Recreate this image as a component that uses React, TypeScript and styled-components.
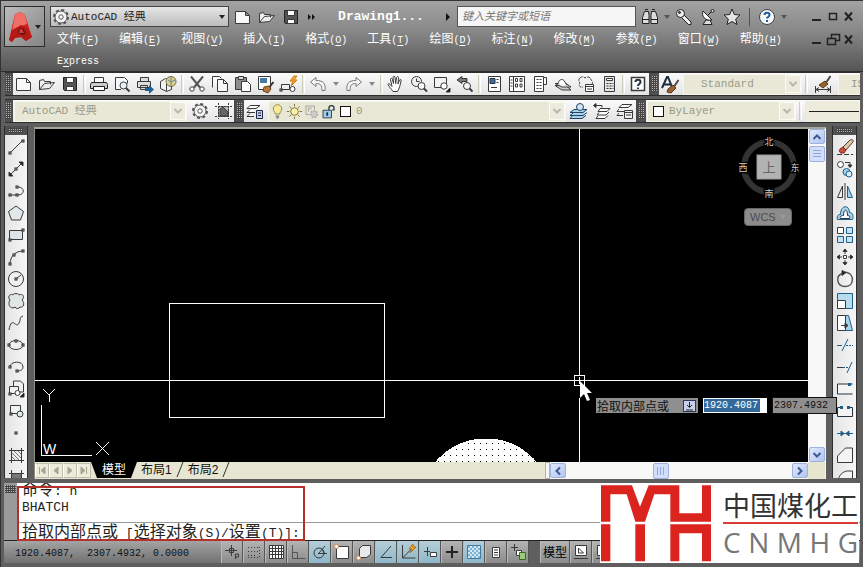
import React from "react";
import styled, { createGlobalStyle, css } from "styled-components";

const MONO = '"Liberation Mono", "Noto Sans CJK SC", monospace';
const SANS = '"Liberation Sans", "Noto Sans CJK SC", sans-serif';

const GlobalStyle = createGlobalStyle`
  * { box-sizing: border-box; }
  body { margin: 0; background: #5e5e5e; font-family: ${MONO}; font-size: 12px; color: #222; }
  button, input, select { font-family: inherit; margin: 0; }
`;

/* ---------- icons ---------- */

const node = (x: number, y: number) => (
  <rect key={`${x}-${y}`} x={x - 1} y={y - 1} width="2" height="2" fill="#fff" stroke="#222" />
);
const BLUE = "#a9d3ea";
const DEEP = "#1f5f8b";

const glyphs: Record<string, React.ReactNode> = {
  newFile: <path d="M2.5 4.5h10l4 4v8h-14z M12.5 4.5v4h4" fill="#f8f8f8" />,
  open: <path d="M2.5 15.5v-9l4-1 1 2h6v3 M2.5 15.5l5-6 10-1-5 6z" fill="#eee" />,
  save: (
    <>
      <path d="M3.5 3.5h13v13h-12l-1-1z" fill="#555" stroke="#222" />
      <path d="M6.5 3.5h7v5h-7z M6.5 12.5h7v4h-7z" fill="#fff" />
    </>
  ),
  print: (
    <>
      <path d="M5.5 8.500v-5h9v5" fill="#fff" />
      <path d="M2.500 8.500h15l1 2v4h-3v-2h-11v2h-3v-4z" fill="#ccc" stroke="#222" />
      <path d="M4.500 12.500h11v4h-11z" fill="#fff" stroke="#222" />
    </>
  ),
  preview: (
    <>
      <path d="M9 15.500h-5.500v-12h9l3 3v3" fill="#f6f6f6" />
      <circle cx="11.500" cy="11.500" r="3.500" fill="#e8f2f7" />
      <path d="M14 14l3.500 3.500" strokeWidth="2" />
    </>
  ),
  publish: (
    <>
      <path d="M5.500 7.500v-4h8v4 M2.500 7.500h13v6h-13z M5.500 11.500h7v4h-7z" fill="#ddd" />
      <path d="M10 14h4v-3l5 4.500-5 4.500v-3h-4z" fill="#1c5f94" stroke="none" />
    </>
  ),
  dwf: (
    <>
      <path d="M2.500 7.500l5-3 6 2v9l-5 2-6-3z" fill="#eef4f6" />
      <circle cx="13" cy="7.500" r="5" fill="#e0cf8b" stroke="#7c6b3a" />
      <path d="M10 6l3 2 4-2 M13 3v9" stroke="#5b8aa0" />
      <path d="M8.500 10v7" />
    </>
  ),
  cut: (
    <>
      <path d="M4 2.500l9 11 M16 2.500l-9 11" strokeWidth="2" stroke="#555" />
      <circle cx="5" cy="15" r="2.200" fill="#fff" />
      <circle cx="15" cy="15" r="2.200" fill="#fff" />
    </>
  ),
  copy: <path d="M2.500 13.500v-11h7l2 2 M7.500 5.500h6l4 4v8h-10z M13.500 5.500v4h4" fill="#f8f8f8" />,
  paste: (
    <>
      <path d="M2.500 3.500h11v12h-11z" fill="#8d8d8d" />
      <path d="M5.500 2.500h5v3h-5z" fill="#ddd" />
      <path d="M8.500 7.500h6l3 3v7h-9z" fill="#fff" />
    </>
  ),
  match: (
    <>
      <path d="M2.500 2.500h12v13h-12z" fill="#fff" />
      <path d="M4 4h7v5h-7z" fill="#4779a4" stroke="none" />
      <path d="M17.500 8l-4 5" stroke="#333" strokeWidth="2" />
      <path d="M8 13l5-1 2 3-3 4-5-2z" fill="#b4783b" stroke="#6e4218" />
    </>
  ),
  blockEdit: (
    <>
      <path d="M2.500 15.500v-5h8v5z" fill="#eee" />
      {node(2, 16)}
      <circle cx="13.500" cy="15" r="2.500" fill="#fff" />
      <path d="M15 2l-4 5h3l-2 5 6-6h-3l3-4z" fill="#f7a928" stroke="#c97b12" />
    </>
  ),
  undo: <path d="M8 3.500l-5.500 4.500 5.500 4.500v-3c5 0 6 2 6 7 l3 0c1-7-2-10-9-10z" fill="#fafafa" stroke="#777" />,
  redo: <path d="M12 3.500l5.500 4.500-5.500 4.500v-3c-5 0-6 2-6 7l-3 0c-1-7 2-10 9-10z" fill="#fafafa" stroke="#777" />,
  pan: (
    <path d="M7 17.500c-2-3-4-5-5-7 0-1 2-1 3 1l1 1-1.500-7c0-1.500 1.500-1.500 2 0l1 4-.5-6c0-1.500 2-1.500 2 0l.7 6 .8-6c.5-1.500 2-1 2 0l-.5 6.500 1.500-4c1-1 2-.5 1.500 1-1 5-1.500 7-3.500 10.500z" fill="#fff" />
  ),
  zoomRt: (
    <>
      <circle cx="7.500" cy="7.500" r="5" fill="#eee" />
      <path d="M7.500 4.500v3h3" />
      <circle cx="12.500" cy="12" r="3.500" fill="#f6f6f6" />
      <path d="M15 14.500l3 3" strokeWidth="2" />
    </>
  ),
  zoomWin: (
    <>
      <path d="M2.500 3.500h12v10h-12z" fill="#f3f3f3" />
      <circle cx="12" cy="12" r="3.200" fill="#fff" />
      <path d="M18 14v4h-4z" fill="#111" />
    </>
  ),
  zoomPrev: (
    <>
      <path d="M7 2.500l-5 3.500 5 3.500v-2h5v-3h-5z" fill="#777" />
      <circle cx="12" cy="12" r="3.500" fill="#f6f6f6" />
      <path d="M14.500 14.500l3 3" strokeWidth="2" />
    </>
  ),
  props: (
    <>
      <path d="M4.500 2.500h12v15h-12z" fill="#fff" />
      <path d="M6 4.500h5v5h-5z" fill="#3e6a95" stroke="#234" />
      <path d="M12.500 5.500h2 M12.500 8.500h2 M7 13.500h6" />
    </>
  ),
  center: (
    <>
      <path d="M2.500 2.500h15v15h-15z M6.500 2.500v15" fill="#fff" />
      <path d="M8.500 4.500h2v3h-2z M13 4.500h2v3h-2z M8.500 10h2v3h-2z M13 10h2v3h-2z M3.500 6h2 M3.500 9h2 M3.500 12h2" />
    </>
  ),
  palettes: (
    <>
      <path d="M4.500 2.500h9v15h-9z M13.500 3.500h3v7h-3" fill="#fff" />
      <path d="M6.500 5.500h5 M6.500 8.500h5 M6.500 11.500h5 M6.500 14.500h5" strokeDasharray="2 1" />
    </>
  ),
  sheets: (
    <>
      <path d="M2 11.500l7 4.500h9l-5-4.500z" fill="#ccc" />
      <path d="M2 9.500l7 3.500h9l-5-3.500z" fill="#eee" />
      <path d="M5 9.500c1-4 4-5 6-3l3 5" fill="#fff" />
    </>
  ),
  markup: (
    <>
      <path d="M4 4c2-2 4-1 5 0 2-2 6-1 6 2 2 1 2 4 0 5M4 4c-2 2-1 4 0 5-2 2 0 5 3 4" strokeDasharray="3 1" />
      <path d="M9.500 10.500h8v7h-8z M9.500 12.500h8 M11 15h5" fill="#fff" />
    </>
  ),
  calc: (
    <>
      <path d="M5.500 2.500h10v15h-10z" fill="#e6e6e6" />
      <path d="M7.500 4.500h6v2h-6z" fill="#fff" />
      <path d="M7.500 9.500h7 M7.500 12h7 M7.500 14.500h7" strokeDasharray="2 1" />
    </>
  ),
  help: (
    <>
      <path d="M3.500 3.500h13v13h-13z" fill="#fff" strokeWidth="1.500" />
      <path d="M7.500 8c0-3 5-3 5 0 0 2-2.500 2-2.500 4 M10 13.500v1.500" strokeWidth="2" stroke="#234" />
    </>
  ),
  gear: (
    <>
      <circle cx="10" cy="10" r="7" strokeWidth="2" strokeDasharray="3 2.500" stroke="#555" />
      <circle cx="10" cy="10" r="6" fill="#f3f3f3" stroke="#555" />
      <circle cx="10" cy="10" r="2.200" fill="#fff" stroke="#555" />
    </>
  ),
  workspace: (
    <>
      <path d="M5.500 5.500h10v10h-10z" fill="#bbb" stroke="#777" />
      <path d="M2 5.500h17 M2 15.500h17 M5.500 2v16 M15.500 2v16" strokeDasharray="2 1" />
      <path d="M7 15v-7l3-2 5 5v4z" fill="#666" />
    </>
  ),
  layers: (
    <>
      <path d="M5 4.500h10l-4 3h-9z M5 8.500l-3 3h8 M5 12.500l-3 3h7" fill="#fff" />
      <path d="M11.500 9.500h6v8h-6z M13 12h3 M13 14.500h3" fill="#b9d5e8" stroke="#224" />
    </>
  ),
  bulb: (
    <>
      <path d="M7.500 13c0-2-2.500-3-2.500-6a5 5 0 0 1 10 0c0 3-2.500 4-2.500 6z" fill="#f7eb9b" stroke="#857b35" />
      <path d="M8 15.500h4 M8.500 17.500h3" />
    </>
  ),
  sun: (
    <>
      <circle cx="10" cy="10" r="4.500" fill="#f9efab" stroke="#6e6425" />
      <path d="M10 1v3 M10 16v3 M1 10h3 M16 10h3 M4 4l2 2 M14 14l2 2 M4 16l2-2 M14 6l2-2" stroke="#6e6425" />
    </>
  ),
  freeze: (
    <>
      <path d="M3.500 13.500v-10h10v4 M3.500 13.500h4 M6.500 10v-4h4" fill="none" stroke="#999" />
      <circle cx="13" cy="13" r="4" strokeWidth="2" strokeDasharray="2 1.500" stroke="#aaa" fill="#ccc" />
    </>
  ),
  lock: (
    <>
      <path d="M10.500 9v-3c0-4 6-4 6 0v2h-2" fill="none" stroke="#234" strokeWidth="1.500" />
      <path d="M3.500 8.500h10v9h-10z" fill="#9fcde6" stroke="#234" />
      <path d="M8.500 11v4" stroke="#124" strokeWidth="2" />
    </>
  ),
  makeLayer: (
    <>
      <path d="M5 8.500h13l-4 3h-13z M4 12l-3 2.500h13l4-3 M3 15l-2 2.500h12l4-3" fill={BLUE} stroke="#246" />
      <circle cx="11" cy="6" r="3.500" fill="#cfe6f2" stroke="#246" />
    </>
  ),
  layerPrev: (
    <>
      <path d="M8 7.500h10l-3 3h-9z M7 11.500l-2 2.500h9l3-3 M6 15l-2 2.500h9l3-3" fill="#fff" />
      <path d="M2 4.500h8v2" />
      <path d="M4 2.500l-2.500 2 2.500 2z" fill="#222" />
    </>
  ),
  layerState: (
    <>
      <path d="M7 3.500h10l-4 3h-9z M4 8l-2 2.500h7 M4 12l-2 2.500h6" fill="#fff" />
      <path d="M9.500 9.500h8v8h-8z M9.500 11.500h8 M11 14h5" fill="#eee" />
    </>
  ),
  textStyle: (
    <>
      <path d="M2 14l5-11h1l4 10 M4 10.500h7" fill="none" stroke="#1e2c3c" strokeWidth="2" />
      <path d="M18.500 6l-4 6" stroke="#544" strokeWidth="2" />
      <path d="M8 15l5-4 3 3-5 5-4-1z" fill="#96622e" stroke="#5d3912" />
    </>
  ),
  dimStyle: (
    <>
      <path d="M2.500 12v7 M17.500 12v7 M3 15.500h14 M6 13.500l-3 2 3 2 M14 13.500l3 2-3 2" />
      <path d="M17.500 2l-4 6" stroke="#544" strokeWidth="2" />
      <path d="M6 11l6-4 3 3-5 4z" fill="#96622e" stroke="#5d3912" />
    </>
  ),
  find: (
    <>
      <path d="M4.500 4.500h4l.5 4v8h-6.500v-6z M15.500 4.500h-4l-.5 4v8h6.500v-6z" fill="#ddd" stroke="#222" />
      <path d="M3 12.500h6 M11 12.500h6 M5 2.500h3 M12 2.500h3" stroke="#222" />
    </>
  ),
  key: (
    <>
      <path d="M9 7l8 8v2.500h-2.500l-8-8" fill="#eee" stroke="#222" />
      <circle cx="6.500" cy="6.500" r="4" fill="#eee" stroke="#222" />
      <circle cx="5.500" cy="5.500" r="1" fill="#444" stroke="#222" />
    </>
  ),
  dish: (
    <>
      <path d="M8 13l-3 4.500h9l-2-4.500z" fill="#ddd" stroke="#222" />
      <path d="M5 4c-2 6 3 10 9 9z" fill="#fff" stroke="#222" />
      <path d="M10 8l5-5" stroke="#222" />
      <circle cx="14.500" cy="4" r="1.500" fill="#ddd" stroke="#222" />
    </>
  ),
  star: <path d="M10 2l2.300 5.500 5.700.5-4.300 4 1.300 5.500-5-3-5 3 1.300-5.500-4.300-4 5.700-.5z" fill="#e4e4e4" stroke="#222" />,
  helpRound: (
    <>
      <circle cx="10" cy="10" r="7.500" fill="#f4f8fa" stroke="#444" />
      <path d="M7.500 8c0-3 5-3 5 0 0 2-2.500 2-2.500 3.500 M10 13v2" fill="none" strokeWidth="2" stroke="#1d5c96" />
    </>
  ),
  min: <path d="M5 13h9" stroke="#222" strokeWidth="2" />,
  max: <path d="M6.500 6.500h7v6h-7z" fill="none" stroke="#222" strokeWidth="1.500" />,
  close: <path d="M6 5.500l7 8 M13 5.500l-7 8" stroke="#222" strokeWidth="2" />,
  restore: <path d="M8.500 8.500v-4h8v6h-4 M4.500 8.500h8v6h-8z" fill="none" stroke="#222" strokeWidth="1.500" />,

  line: <>{<path d="M4 16l13-13" />}{node(4, 16)}{node(17, 4)}</>,
  xline: (
    <>
      <path d="M3 17l14-14" />
      <path d="M13 3h4v4z M3 13v4h4z" fill="#222" />
      {node(10, 10)}
    </>
  ),
  pline: <>{<path d="M4 14h8c7 0 7-8 0-8" fill="none" />}{node(4, 14)}{node(11, 14)}{node(11, 6)}</>,
  polygon: <path d="M10 3l7.500 5.500-3 8.500h-9l-3-8.500z" fill="#e3e8ea" />,
  rect: <>{<path d="M3.500 5.500h13v9h-13z" fill="#dde3e6" />}{node(4, 15)}{node(17, 5)}</>,
  arc: <>{<path d="M4 17c0-7 5-13 13-13" fill="none" />}{node(4, 17)}{node(8, 8)}{node(17, 4)}</>,
  circle: (
    <>
      <circle cx="10" cy="10" r="7.500" fill="#eef0f1" />
      <path d="M10 10l5-4" />
      {node(10, 10)}
    </>
  ),
  cloud: <path d="M4 9c-3-3 0-7 3-5 1-2 5-2 6 0 4-2 6 2 3 5 3 3 2 8-2 7-1 2-4 2-5 0-4 3-8-2-5-7z" fill="#e2e5e6" />,
  spline: <path d="M3 17c3-16 7 0 10-7 2-3 0-6 4-7" fill="none" />,
  ellipse: (
    <>
      <ellipse cx="10" cy="10" rx="7" ry="4.500" fill="#eef1f2" />
      {node(3, 10)}{node(17, 10)}{node(10, 6)}
    </>
  ),
  ellArc: <>{<path d="M4 10c0-6 13-7 13 0 0 3-3 4-6 4" fill="none" />}{node(4, 10)}{node(11, 14)}</>,
  insert: (
    <>
      <path d="M7.500 7v-5h7l3 3v8h-6 M3.500 7.500h9v7h-9z" fill="#eef2f4" />
      <circle cx="11.500" cy="14" r="2.500" fill="#fff" />
      {node(4, 15)}
      <path d="M18 14v4h-4z" fill="#111" />
    </>
  ),
  block: (
    <>
      <path d="M4.500 4.500h10v8h-10z" fill="#eef2f4" />
      <circle cx="14" cy="13" r="3" fill="#e1e9ed" />
      {node(5, 13)}
    </>
  ),
  point: <>{node(10, 10)}</>,
  hatch: (
    <>
      <path d="M5.500 3v15 M15.500 3v15 M3 5.500h15 M3 15.500h15" />
      <path d="M6 12l3 3 M6 8l7 7 M8 6l7 7 M12 6l3 3" stroke="#777" />
    </>
  ),
  gradient: (
    <>
      <path d="M5.500 6.500h10v8h-10z" fill="#777" />
      <path d="M3 6.500h15 M5.500 3v15 M15.500 3v15 M3 16.500h15" />
    </>
  ),

  erase: (
    <>
      <path d="M2 17.500h16" strokeDasharray="5 2" />
      <path d="M8 10l7-7c2-1 4 0 3 2l-7 8z" fill="#d8c7ae" stroke="#6b3a1c" />
      <path d="M5 12l3-2 3 3-2 3h-3c-2-1-2-2-1-4z" fill="#c9503d" stroke="#7f261a" />
    </>
  ),
  copyObj: (
    <>
      <circle cx="5.500" cy="5.500" r="3" fill="#fff" />
      <circle cx="11.500" cy="13" r="3.500" fill={BLUE} stroke={DEEP} />
      <circle cx="14" cy="15" r="3" fill="#d4ebf7" stroke={DEEP} />
      <path d="M10 3.500h5v3" />
      <path d="M13 6l2 2.500 2-2.500z" fill="#222" />
    </>
  ),
  mirror: (
    <>
      <path d="M7.500 5v11.500h-5z" fill="#eee" />
      <path d="M12.500 5v11.500h5z" fill={BLUE} stroke={DEEP} />
      <path d="M10 2v17" />
    </>
  ),
  offset: (
    <>
      <path d="M2.500 16.500c-1-4 1-5 3-5 0-10 9-10 9-2 4 0 4 5 3 7z" fill={BLUE} stroke={DEEP} />
      <path d="M5.500 15.500c-1-2 1-3 3-3 0-7 4-7 4 0 2 0 3 1 2 3z" fill="#fff" stroke="#234" />
    </>
  ),
  array: (
    <>
      <path d="M2.500 2.500h6v6h-6z" fill="#fff" />
      <path d="M11.500 2.500h6v6h-6z M2.500 11.500h6v6h-6z M11.500 11.500h6v6h-6z" fill="#c5e3f3" stroke={DEEP} />
    </>
  ),
  move: (
    <>
      <path d="M8.500 8.500h3v3h-3z" fill="#fff" />
      <path d="M10 7v-4 M10 13v4 M7 10h-4 M13 10h4" />
      <path d="M8 4.500l2-2.500 2 2.500z M8 15.500l2 2.500 2-2.500z M4.500 8l-2.500 2 2.500 2z M15.500 8l2.500 2-2.500 2z" fill="#222" />
    </>
  ),
  rotate: (
    <>
      <path d="M7 4.500c-7 3-5 13 3 13 9 0 10-12 2-14h-4" fill="none" stroke="#555" strokeWidth="1.500" />
      <path d="M7 1.500l4 2-4 3z" fill="#222" />
    </>
  ),
  scale: (
    <>
      <path d="M2.500 2.500h15v15h-15z" fill="#b7dced" stroke={DEEP} />
      <path d="M2.500 9.500h8v8h-8z" fill="#fff" />
    </>
  ),
  stretch: (
    <>
      <path d="M10.500 2.500h3l4 15h-7z" fill={BLUE} stroke={DEEP} />
      <path d="M2.500 2.500h8v15h-8z" fill="#fff" />
      <path d="M6 12.500h6 M10 10l3 2.500-3 2.500z" fill="#222" />
    </>
  ),
  trim: (
    <>
      <path d="M2 10.500h5 M7 16l6-12" stroke={DEEP} />
      <path d="M11 10.500h7" strokeDasharray="2 1" stroke={DEEP} />
    </>
  ),
  extend: (
    <>
      <path d="M2 10.500h6" />
      <path d="M8 10.500h6" strokeDasharray="2 1" stroke={DEEP} />
      <path d="M12 16l5-11" stroke={DEEP} />
    </>
  ),
  breakAt: (
    <>
      <path d="M17.500 5h-15v10h15" fill="#f4f4f4" stroke="#234" />
      <rect x="13" y="4" width="3" height="3" fill={DEEP} stroke="none" />
    </>
  ),
  breakObj: (
    <>
      <path d="M5 6.500h-2.500v9h15v-9h-3" fill="#f4f4f4" stroke="#234" />
      <path d="M5 5h3v3h-3z M12 5h3v3h-3z" fill={DEEP} stroke="none" />
    </>
  ),
  join: <path d="M2 10.500h16 M6 8l3 2.500-3 2.500z M14 8l-3 2.500 3 2.500z" fill={DEEP} stroke={DEEP} />,
  chamfer: <path d="M2.500 11l8-8h7v14.500h-15z" fill="#f4f4f4" />,
  fillet: <path d="M2.500 19v-4c1-7 6-11 10-11h5v15" fill="#f4f4f4" />,

  infer: (
    <>
      <path d="M3 8.500h12 M9.500 3v11 M7.500 6.500h4v4h-4z" />
      <path d="M13.500 17v-5h3v3h-3" />
    </>
  ),
  snap: <path d="M4 5.500h12 M4 9.500h12 M4 13.500h9 M15.500 5v11 M4 15.500h12" strokeDasharray="1 2" />,
  grid: <path d="M3.500 3.500h14v13h-14z M6.500 3v13 M9.500 3v13 M12.500 3v13 M15.500 3v13 M3 6.500h14 M3 9.500h14 M3 12.500h14" fill="#fff" />,
  ortho: <path d="M4.500 3v13.500h13 M4.500 10.500h5v6" fill="none" stroke="#555" />,
  polar: (
    <>
      <circle cx="9" cy="11" r="5" fill="none" />
      <path d="M8 11.500h9 M9 11l6-7 M12 7l2 4" />
    </>
  ),
  osnap: (
    <>
      <path d="M4.500 4.500h12v12h-12z" fill="#fff" />
      <circle cx="4.500" cy="4.500" r="2" fill="#fff" stroke="#d98a4c" />
    </>
  ),
  osnap3: (
    <>
      <path d="M5.500 6.500l3-3h8v9l-4 3h-7z" fill="#e6eaec" />
      <circle cx="4.500" cy="16" r="2" fill="#fff" stroke="#d98a4c" />
    </>
  ),
  otrack: <path d="M15 4l-10 11.500h11" fill="none" />,
  ducs: (
    <>
      <path d="M4.500 3v13h13 M4.500 16l9-9" fill="none" />
      <path d="M15 2l-4 5h3l-2 4 6-6h-3z" fill="#f7a928" stroke="#b36f10" />
    </>
  ),
  dyn: <path d="M4 9.500h6 M7.500 5v9 M10.500 10.500h6v4h-6z" fill="#fff" />,
  lwt: <path d="M4 10h12 M10 4v12" strokeWidth="2" stroke="#222" />,
  tpy: (
    <>
      <path d="M3.500 3.500h13v13h-13z" fill="#d5e9f3" stroke="#3f7ba0" />
      <path d="M4 5h12 M4 9h12 M4 13h12" strokeDasharray="2 2" stroke="#7fb2d2" strokeWidth="2" />
      <path d="M6 7h10 M6 11h10 M6 15h10" strokeDasharray="2 2" stroke="#7fb2d2" strokeWidth="2" />
    </>
  ),
  qp: <path d="M6.500 5.500h7v10h-7z M8 8h4 M8 10.500h4 M8 13h4" fill="#fff" />,
  sc: (
    <>
      <path d="M3 5.500h7 M6.500 2v7" />
      <path d="M8.500 8.500h5v5h-5z" fill="#fff" />
      <path d="M11.500 10.500h6v7h-6z" fill="#9ccc79" stroke="#356b1c" />
    </>
  ),
  modelSpace: (
    <>
      <path d="M4.500 3.500h11v10h-11z" fill="#fff" />
      <path d="M7.500 6v5h5z M3 16.500h14" fill="none" />
    </>
  ),
};

const Svg = styled.svg`
  display: block;
  flex: none;
`;

function Icon({ name, size = 20 }: { name: string; size?: number }) {
  return (
    <Svg width={size} height={size} viewBox="0 0 20 20" fill="none" stroke="#3a3a3a" aria-hidden="true">
      {glyphs[name]}
    </Svg>
  );
}

/* ---------- shared parts ---------- */

const IconButton = styled.button<{ $w?: number }>`
  width: ${(p) => p.$w ?? 20}px;
  height: 20px;
  flex: none;
  padding: 0;
  border: 0;
  background: none;
  display: flex;
  align-items: center;
  justify-content: center;
`;

const Caret = styled.span<{ $color?: string }>`
  border: 3px solid transparent;
  border-top: 4px solid ${(p) => p.$color ?? "#555"};
  border-bottom: 0;
`;

const Chevron = ({ color = "#3d5a94", turn = 0 }: { color?: string; turn?: number }) => (
  <Svg width="10" height="10" viewBox="0 0 10 10" aria-hidden="true">
    <path d="M1.500 3l3.500 3.500 3.500-3.500" fill="none" stroke={color} strokeWidth="2" transform={`rotate(${turn} 5 5)`} />
  </Svg>
);

const dotted = css`
  background:
    repeating-linear-gradient(0deg, #444 0 1px, transparent 1px 2px) content-box,
    repeating-linear-gradient(90deg, #b4b4b4 0 1px, #444 1px 2px) content-box,
    #505050;
`;

/* ---------- header ---------- */

const Window = styled.div`
  min-height: 100vh;
  display: flex;
  flex-direction: column;
  background: #5e5e5e;
  border-left: 1px solid #333;
  position: relative;
  overflow: hidden;
`;

const Header = styled.header`
  display: flex;
  align-items: flex-start;
  gap: 5px;
  height: 72px;
  padding: 5px 6px 0 3px;
  background: linear-gradient(#a2a2a2, #8a8a8a 40%, #555);
  border-top: 1px solid #333;
  border-bottom: 1px solid #2d2d2d;
`;

const AppButton = styled.button`
  width: 41px;
  height: 41px;
  flex: none;
  display: flex;
  align-items: center;
  justify-content: center;
  gap: 2px;
  padding: 0;
  border: 1px solid #2c2c2c;
  background: linear-gradient(135deg, #bbb, #858585);
`;

const HeaderRows = styled.div`
  flex: 1;
  min-width: 0;
`;

const TitleRow = styled.div`
  display: flex;
  align-items: center;
  gap: 4px;
  height: 21px;
`;

const WorkspacePicker = styled.label`
  display: flex;
  align-items: center;
  width: 179px;
  height: 21px;
  padding-right: 3px;
  border: 1px solid #444;
  background: linear-gradient(#e6e6e6, #bcbcbc);
`;

const PlainSelect = styled.select<{ $color: string }>`
  flex: 1;
  min-width: 0;
  height: 100%;
  padding: 0;
  border: 0;
  appearance: none;
  background: transparent;
  font-size: 11px;
  color: ${(p) => p.$color};
`;

const More = styled(IconButton)`
  color: #111;
`;

const DocTitle = styled.h1`
  flex: 1;
  margin: 0;
  text-align: center;
  font-family: "Liberation Mono", monospace;
  font-size: 13px;
  line-height: 20px;
  font-weight: bold;
  color: #fff;
  white-space: nowrap;
`;

const Search = styled.input`
  width: 179px;
  height: 21px;
  padding: 0 4px;
  border: 1px solid #555;
  background: #f6f6f6;
  font-size: 11px;
  &::placeholder { color: #777; font-style: italic; opacity: 1; }
`;

const Divider = styled.span`
  width: 1px;
  height: 18px;
  margin: 0 3px;
  background: #555;
`;

const WindowButtons = styled.div`
  display: flex;
  flex: none;
  padding-left: 18px;
  button { width: 16px; }
`;

const MenuRow = styled.div`
  display: flex;
  align-items: flex-start;
  padding: 3px 0 0 7px;
`;

const Menu = styled.nav`
  flex: 1;
  display: flex;
  flex-wrap: wrap;
  column-gap: 20px;
`;

const MenuItem = styled.button`
  padding: 0;
  border: 0;
  background: none;
  color: #fff;
  font-size: 12px;
  line-height: 21px;
  height: 21px;
  white-space: nowrap;
`;

const Latin = styled.span`
  font-size: 10px;
  u { text-underline-offset: 2px; }
`;

/* ---------- toolbars ---------- */

const ToolbarRow = styled.div`
  display: flex;
  gap: 2px;
  height: 24px;
  margin: 0 3px 3px 4px;
  border-top: 1px solid #2d2d2d;
  border-bottom: 1px solid #2d2d2d;
  background: #4a4a4a;
`;

const Grip = styled.span<{ $flat?: boolean }>`
  flex: none;
  ${(p) =>
    p.$flat
      ? css`height: 9px; padding: 2px 4px; width: 100%;`
      : css`width: 8px; padding: 3px 2px 3px 1px;`}
  ${dotted}
`;

const Band = styled.div<{ $grow?: boolean }>`
  display: flex;
  min-width: 0;
  ${(p) => p.$grow && "flex: 1; overflow: hidden;"}
`;

const BandBody = styled.div<{ $grow?: boolean }>`
  display: flex;
  align-items: center;
  gap: 3px;
  padding: 0 1px;
  background: linear-gradient(#fafafa, #e4e4e4);
  ${(p) => p.$grow && "flex: 1; min-width: 0;"}
`;

const Rule = styled.span`
  width: 3px;
  height: 18px;
  flex: none;
  border-left: 1px solid #c9ccb6;
  border-right: 1px solid #fff;
`;

const Combo = styled.label<{ $w: number; $indent: number }>`
  display: flex;
  align-items: center;
  flex: none;
  width: ${(p) => p.$w}px;
  height: 21px;
  padding-left: ${(p) => p.$indent}px;
  border: 1px solid #f7f7ee;
  background: #e9e8d6;
`;

const ComboArrow = styled.span`
  width: 16px;
  height: 18px;
  display: flex;
  align-items: center;
  justify-content: center;
  border: 1px solid #fbfbf4;
  background: #ecebdd;
  pointer-events: none;
`;

const Swatch = styled.span`
  width: 11px;
  height: 11px;
  flex: none;
  margin: 0 5px 0 3px;
  border: 1px solid #111;
  background: #fff;
`;

const LayerIcons = styled.span`
  display: flex;
`;

const LineSample = styled.span`
  flex: 1;
  height: 21px;
  background: linear-gradient(#222, #222) right / calc(100% - 4px) 1px no-repeat, #ecebdc;
`;

function Select({ label, value, width, indent, children }: {
  label: string; value: string; width: number; indent: number; children?: React.ReactNode;
}) {
  return (
    <Combo $w={width} $indent={indent}>
      {children}
      <PlainSelect aria-label={label} $color="#9a9a88" defaultValue={value}>
        <option>{value}</option>
      </PlainSelect>
      <ComboArrow><Chevron color="#b9b9a8" /></ComboArrow>
    </Combo>
  );
}

/* ---------- work area ---------- */

const Main = styled.main`
  flex: 1;
  display: flex;
  min-height: 0;
  padding: 0 6px 0 3px;
`;

const SideBar = styled.div<{ $w: number }>`
  width: ${(p) => p.$w}px;
  flex: none;
  height: 352px;
  overflow: hidden;
  display: flex;
  flex-direction: column;
  align-items: center;
  gap: 2px;
  border-left: 1px solid #2d2d2d;
  border-right: 1px solid #2d2d2d;
  background: linear-gradient(90deg, #e4e4e4, #f6f6f6);
`;

const Document = styled.div`
  flex: 1;
  min-width: 0;
  margin: 1px 6px 0 6px;
  display: grid;
  grid-template-columns: 1fr 17px;
  grid-template-rows: 1fr 17px;
  border-top: 2px solid #a5a59c;
  border-left: 1px solid #8b8b84;
  border-right: 1px solid #f4f4f0;
`;

const Canvas = styled.div`
  position: relative;
  background: #000;
  min-width: 0;
`;

const Drawing = styled.svg`
  position: absolute;
  inset: 0;
  width: 100%;
  height: 100%;
`;

const CubeOverlay = styled.div`
  position: absolute;
  top: 5px;
  right: 6px;
  width: 66px;
`;

const WcsButton = styled.button`
  position: absolute;
  top: 79px;
  right: 16px;
  width: 48px;
  height: 18px;
  padding: 0 5px;
  display: flex;
  align-items: center;
  justify-content: space-between;
  border: 1px solid #666;
  border-radius: 4px;
  background: #8c8c8c;
  color: #4c4c4c;
  font-family: ${SANS};
  font-size: 11px;
`;

const Prompt = styled.div`
  position: absolute;
  z-index: 3;
  left: 561px;
  top: 268px;
  height: 17px;
  display: flex;
  align-items: center;
  gap: 5px;
  white-space: nowrap;
`;

const PromptLabel = styled.label`
  display: flex;
  align-items: center;
  justify-content: space-between;
  width: 102px;
  height: 15px;
  padding: 1px 0 0 1px;
  background: #8f8f8f;
  color: #111;
  font-family: "Noto Sans CJK SC", sans-serif;
  font-size: 12px;
  line-height: 14px;
`;

const DownBox = styled.button`
  width: 13px;
  height: 12px;
  padding: 0;
  margin-right: 2px;
  border: 1px solid #2b3566;
  background: #c9d0ea;
  display: flex;
  align-items: center;
  justify-content: center;
`;

const CoordBox = styled.span<{ $active?: boolean }>`
  display: flex;
  align-items: center;
  width: ${(p) => (p.$active ? 64 : 65)}px;
  height: ${(p) => (p.$active ? 15 : 17)}px;
  padding-left: 1px;
  border: ${(p) => (p.$active ? "0" : "1px solid #111")};
  background: ${(p) => (p.$active ? "#fff" : "#8f8f8f")};
`;

const CoordInput = styled.input<{ $active?: boolean }>`
  width: 56px;
  height: 13px;
  padding: 0;
  border: 0;
  font-size: 10px;
  line-height: 13px;
  background: ${(p) => (p.$active ? "#33699a" : "transparent")};
  color: ${(p) => (p.$active ? "#fff" : "#111")};
`;

const Track = styled.div<{ $vertical?: boolean }>`
  display: flex;
  flex: 1;
  min-width: 0;
  flex-direction: ${(p) => (p.$vertical ? "column" : "row")};
  justify-content: space-between;
  align-items: center;
  background: #f8f8f6;
`;

const ScrollButton = styled.button`
  width: 16px;
  height: 15px;
  padding: 0;
  display: flex;
  align-items: center;
  justify-content: center;
  border: 1px solid #9db2e0;
  border-radius: 2px;
  background: linear-gradient(135deg, #dfe8fc, #b3c5f0);
`;

const ThumbSlot = styled.span<{ $vertical?: boolean }>`
  flex: 1;
  display: flex;
  ${(p) => (p.$vertical ? "padding-top: 2px;" : "padding-left: 87px;")}
`;

const Thumb = styled.span<{ $vertical?: boolean }>`
  width: 16px;
  height: 16px;
  border: 1px solid #9db2e0;
  border-radius: 2px;
  background:
    repeating-linear-gradient(${(p) => (p.$vertical ? "180deg" : "90deg")}, #8fa6dc 0 1px, transparent 1px 3px) center / 8px 8px no-repeat,
    #d3dffa;
`;

const Bottom = styled.div`
  display: flex;
  background: #e6e6d2;
  min-width: 0;
`;

const TabStrip = styled.div`
  flex: 1;
  display: flex;
  min-width: 0;
`;

const TabArrow = styled.button`
  width: 14px;
  height: 15px;
  margin-top: 1px;
  padding: 0;
  border: 1px solid #bdbda8;
  border-left-color: #fff;
  background: #ecebdc;
  display: flex;
  align-items: center;
  justify-content: center;
`;

const Tab = styled.button<{ $active?: boolean }>`
  border: 0;
  height: 16px;
  padding: ${(p) => (p.$active ? "0 11px" : "0 2px 0 4px")};
  line-height: 15px;
  font-family: ${SANS};
  font-size: 12px;
  white-space: nowrap;
  background: ${(p) => (p.$active ? "#000" : "transparent")};
  color: ${(p) => (p.$active ? "#fff" : "#111")};
  ${(p) => p.$active && "clip-path: polygon(0 0, 100% 0, calc(100% - 6px) 100%, 6px 100%);"}
`;

const Splitter = styled.span`
  width: 5px;
  border: 1px solid #b5b5a3;
  background: #f6f6f0;
`;

const HScroll = styled.div`
  width: 258px;
  display: flex;
`;

const Corner = styled.span`
  background: #e6e6cf;
`;

/* ---------- command line and status ---------- */

const Command = styled.section`
  position: relative;
  display: flex;
  height: 58px;
  margin: 4px 3px 0;
  border-bottom: 1px solid #222;
  background: #fff;
`;

const CommandGrip = styled.span`
  width: 13px;
  flex: none;
  background: #9a9a9a;
  &::before {
    content: "";
    display: block;
    height: 8px;
    padding: 2px 1px;
    ${dotted}
    background-color: #9a9a9a;
  }
`;

const CommandBody = styled.div`
  flex: 1;
  overflow: hidden;
  color: #222;
`;

const History = styled.div`
  height: 40px;
  border-bottom: 1px solid #999;
  overflow: hidden;
  display: flex;
  flex-direction: column;
  justify-content: flex-end;
  padding: 0 0 7px 5px;
`;

const CommandLine = styled.div`
  flex: none;
  height: 16px;
  font-size: 16px;
  line-height: 16px;
  white-space: pre;
`;

const CommandPrompt = styled(CommandLine)`
  padding: 2px 0 0 5px;
`;

const Wide = styled.span`
  font-size: 13px;
`;

const RedFrame = styled.div`
  position: absolute;
  left: 13px;
  top: 3px;
  width: 288px;
  height: 55px;
  border: 2px solid #b3302b;
`;

const Status = styled.footer`
  display: flex;
  height: 22px;
  margin: 0 3px 4px;
  background: linear-gradient(#a4a4a4, #717171);
`;

const Coordinates = styled.output`
  width: 217px;
  padding-left: 11px;
  font-size: 10px;
  line-height: 26px;
  white-space: pre;
  color: #111;
`;

const StatusButton = styled.button<{ $on?: boolean; $w?: number }>`
  width: ${(p) => p.$w ?? 22}px;
  height: 22px;
  flex: none;
  padding: 0;
  display: flex;
  align-items: center;
  justify-content: center;
  border: 0;
  border-right: 1px solid #555;
  border-left: 1px solid #bbb;
  font-size: 12px;
  background: ${(p) => (p.$on ? "linear-gradient(#b5cdd8, #8fb7c9)" : "linear-gradient(#b4b4b4, #8b8b8b)")};
`;

const StatusGap = styled.span`
  width: 11px;
  background: #5f5f5f;
`;

const Logo = styled.div`
  position: absolute;
  right: 4px;
  bottom: 4px;
  width: 259px;
  height: 79px;
  display: flex;
  gap: 12px;
  padding-right: 2px;
  background: #fff;
`;

const LogoText = styled.div`
  flex: 1;
  display: flex;
  flex-direction: column;
`;

const LogoName = styled.div`
  height: 40px;
  border-bottom: 2px solid #dc3a36;
  font-family: "Noto Sans CJK SC", sans-serif;
  font-size: 27px;
  line-height: 42px;
  color: #333;
  white-space: nowrap;
`;

const LogoLatin = styled.div`
  display: flex;
  justify-content: space-between;
  font-family: "Open Sans", sans-serif;
  font-size: 28px;
  line-height: 37px;
  color: #777;
`;

/* ---------- data ---------- */

const menus: [string, string][] = [
  ["文件", "F"], ["编辑", "E"], ["视图", "V"], ["插入", "I"], ["格式", "O"], ["工具", "T"],
  ["绘图", "D"], ["标注", "N"], ["修改", "M"], ["参数", "P"], ["窗口", "W"], ["帮助", "H"],
];

const standardTools = [
  "newFile", "open", "save", "|", "print", "preview", "publish", "dwf", "|",
  "cut", "copy", "paste", "match", "blockEdit", "|", "undo", "v", "redo", "v", "|",
  "pan", "zoomRt", "zoomWin", "zoomPrev", "|", "props", "center", "palettes", "sheets", "markup", "calc", "|", "help",
];

const drawTools = [
  "line", "xline", "pline", "polygon", "rect", "arc", "circle", "cloud",
  "spline", "ellipse", "ellArc", "insert", "block", "point", "hatch", "gradient",
];

const modifyTools = [
  "erase", "copyObj", "mirror", "offset", "array", "move", "rotate", "scale",
  "stretch", "trim", "extend", "breakAt", "breakObj", "join", "chamfer", "fillet",
];

const statusToggles: [string, boolean][] = [
  ["infer", false], ["snap", false], ["grid", false], ["ortho", false], ["polar", true],
  ["osnap", false], ["osnap3", false], ["otrack", true], ["ducs", true], ["dyn", true],
  ["lwt", false], ["tpy", true], ["qp", false], ["sc", false],
];

/* ---------- sections ---------- */

function TitleBar() {
  return (
    <Header>
      <AppButton aria-label="Application menu">
        <Svg width="25" height="34" viewBox="0 0 25 34" aria-hidden="true">
          <path d="M1 30l6-26 6-2 4 3 7 22-6 4-5-4-6 1-3 4z" fill="#d2231f" />
          <path d="M7 4l6-2 4 3 2 9-9 3-6 5z" fill="#ef6f68" />
          <path d="M4 20l9-5 6 3 5 9-6 4-5-4-6 1-3 4-3-2z" fill="#b51a16" />
          <path d="M10 23l1-5h4l3 6-4 1z" fill="#6c0f0d" />
          <path d="M11 23l1-4h2l2 4z" fill="#c9443d" />
        </Svg>
        <Caret $color="#222" />
      </AppButton>
      <HeaderRows>
        <TitleRow>
          <WorkspacePicker>
            <Icon name="gear" />
            <PlainSelect aria-label="Workspace" $color="#222" defaultValue="AutoCAD 经典">
              <option>AutoCAD 经典</option>
            </PlainSelect>
            <Caret $color="#222" />
          </WorkspacePicker>
          {["newFile", "open", "save"].map((n) => (
            <IconButton key={n} aria-label={n}><Icon name={n} /></IconButton>
          ))}
          <More $w={14} aria-label="More">
            <Svg width="8" height="6" viewBox="0 0 8 6"><path d="M0 0l3 3-3 3z M4 0l3 3-3 3z" fill="#111" /></Svg>
          </More>
          <DocTitle>Drawing1...</DocTitle>
          <IconButton $w={10} aria-label="Expand search">
            <Svg width="5" height="8" viewBox="0 0 5 8"><path d="M0 0l4 4-4 4z" fill="#111" /></Svg>
          </IconButton>
          <Search aria-label="Search" placeholder="键入关键字或短语" />
          <IconButton aria-label="Find"><Icon name="find" /></IconButton>
          <Caret />
          <IconButton aria-label="Sign in"><Icon name="key" /></IconButton>
          <IconButton aria-label="Exchange"><Icon name="dish" /></IconButton>
          <IconButton aria-label="Favorites"><Icon name="star" /></IconButton>
          <Divider />
          <IconButton aria-label="Help"><Icon name="helpRound" /></IconButton>
          <Caret />
          <WindowButtons>
            <IconButton aria-label="Minimize"><Icon name="min" /></IconButton>
            <IconButton aria-label="Maximize"><Icon name="max" /></IconButton>
            <IconButton aria-label="Close"><Icon name="close" /></IconButton>
          </WindowButtons>
        </TitleRow>
        <MenuRow>
          <Menu>
            {menus.map(([name, key]) => (
              <MenuItem key={key}>{name}<Latin>(<u>{key}</u>)</Latin></MenuItem>
            ))}
            <MenuItem><Latin>E<u>x</u>press</Latin></MenuItem>
          </Menu>
          <WindowButtons>
            <IconButton aria-label="Minimize drawing"><Icon name="min" /></IconButton>
            <IconButton aria-label="Restore drawing"><Icon name="restore" /></IconButton>
            <IconButton aria-label="Close drawing"><Icon name="close" /></IconButton>
          </WindowButtons>
        </MenuRow>
      </HeaderRows>
    </Header>
  );
}

function Toolbars() {
  return (
    <>
      <ToolbarRow>
        <Band>
          <Grip />
          <BandBody>
            {standardTools.map((t, i) =>
              t === "|" ? <Rule key={i} />
                : t === "v" ? <IconButton key={i} $w={10} aria-label="History"><Caret $color="#888" /></IconButton>
                : <IconButton key={i} aria-label={t}><Icon name={t} /></IconButton>
            )}
          </BandBody>
        </Band>
        <Band $grow>
          <Grip />
          <BandBody $grow>
            <IconButton aria-label="Text style"><Icon name="textStyle" /></IconButton>
            <Select label="Text style" value="Standard" width={119} indent={17} />
            <Rule />
            <IconButton $w={24} aria-label="Dimension style"><Icon name="dimStyle" /></IconButton>
            <Select label="Dimension style" value="ISO-25" width={119} indent={12} />
          </BandBody>
        </Band>
      </ToolbarRow>
      <ToolbarRow>
        <Band>
          <Grip />
          <BandBody>
            <Select label="Workspace" value="AutoCAD 经典" width={173} indent={7} />
            <IconButton aria-label="Workspace settings"><Icon name="gear" /></IconButton>
            <IconButton aria-label="My workspace"><Icon name="workspace" /></IconButton>
          </BandBody>
        </Band>
        <Band>
          <Grip />
          <BandBody>
            <IconButton aria-label="Layer properties"><Icon name="layers" /></IconButton>
            <Select label="Layer" value="0" width={298} indent={0}>
              <LayerIcons>
                <Icon name="bulb" size={17} />
                <Icon name="sun" size={17} />
                <Icon name="freeze" size={17} />
                <Icon name="lock" size={17} />
              </LayerIcons>
              <Swatch />
            </Select>
            <IconButton aria-label="Make current"><Icon name="makeLayer" /></IconButton>
            <IconButton aria-label="Layer previous"><Icon name="layerPrev" /></IconButton>
            <IconButton aria-label="Layer states"><Icon name="layerState" /></IconButton>
          </BandBody>
        </Band>
        <Band $grow>
          <Grip />
          <BandBody $grow>
            <Select label="Color" value="ByLayer" width={149} indent={2}><Swatch /></Select>
            <Rule />
            <LineSample />
          </BandBody>
        </Band>
      </ToolbarRow>
    </>
  );
}

function ViewCube() {
  return (
    <CubeOverlay>
      <Svg width="66" height="68" viewBox="0 0 66 68" fontFamily="Noto Sans CJK SC, sans-serif" textAnchor="middle">
        <circle cx="33" cy="33" r="25" fill="none" stroke="#333" strokeWidth="6" />
        <rect x="21" y="21" width="24" height="24" fill="#b3b3b3" stroke="#999" />
        <g fontSize="9" fill="#ccc" stroke="#000" strokeWidth="3" paintOrder="stroke">
          <text x="33" y="11">北</text>
          <text x="33" y="63">南</text>
          <text x="7" y="37">西</text>
          <text x="59" y="37">东</text>
        </g>
        <text x="33" y="38" fontSize="13" fill="#666">上</text>
      </Svg>
    </CubeOverlay>
  );
}

function DrawingArea() {
  return (
    <Document>
      <Canvas>
        <Drawing fill="none" stroke="#fff" shapeRendering="crispEdges">
          <defs>
            <pattern id="dots" width="6" height="6" patternUnits="userSpaceOnUse">
              <rect width="6" height="6" fill="#fff" stroke="none" />
              <rect x="1" y="2" width="1" height="1" fill="#000" stroke="none" />
            </pattern>
          </defs>
          <circle cx="451" cy="376" r="66" fill="url(#dots)" stroke="#fff" />
          <rect x="134.500" y="174.500" width="215" height="114" />
          <path d="M544.500 0v246 M544.500 269v400 M0 251.500h2000" />
          <path d="M539.500 246.500h10v10h-10z M544.500 248v7" />
          <path d="M6.500 276v50.500h50" />
          <path d="M8 260l6 6v7 M20 260l-6 6" />
          <path d="M61 313l13 13 M74 313l-13 13" />
          <text x="8" y="325" fontFamily="Liberation Sans, sans-serif" fontSize="14" fill="#fff" stroke="none">W</text>
          <path d="M545 252l0 17 4-4 3 7 3-1-3-7h5z" fill="#fff" stroke="none" shapeRendering="auto" />
        </Drawing>
        <ViewCube />
        <WcsButton>WCS<Caret $color="#999" /></WcsButton>
        <Prompt>
          <PromptLabel>
            拾取内部点或
            <DownBox aria-label="Options">
              <Svg width="9" height="9" viewBox="0 0 9 9"><path d="M4.500 0v5 M2 3l2.500 2.500 2.500-2.500 M1 8h7" fill="none" stroke="#222" /></Svg>
            </DownBox>
          </PromptLabel>
          <CoordBox $active><CoordInput $active aria-label="X" defaultValue="1920.4087" /></CoordBox>
          <CoordBox><CoordInput aria-label="Y" defaultValue="2307.4932" /></CoordBox>
        </Prompt>
      </Canvas>
      <Track $vertical>
        <ScrollButton aria-label="Scroll up"><Chevron turn={180} /></ScrollButton>
        <ThumbSlot $vertical><Thumb $vertical /></ThumbSlot>
        <ScrollButton aria-label="Scroll down"><Chevron /></ScrollButton>
      </Track>
      <Bottom>
        <TabStrip>
          {["M2.500 1v7 M8 1v7l-4-3.500z", "M7 1v7l-4-3.500z", "M3 1v7l4-3.500z", "M7.500 1v7 M2 1v7l4-3.500z"].map((d) => (
            <TabArrow key={d} aria-label="Tab navigation">
              <Svg width="10" height="9" viewBox="0 0 10 9"><path d={d} fill="#a5a592" stroke="#a5a592" /></Svg>
            </TabArrow>
          ))}
          <Tab $active>模型</Tab>
          <Tab>布局1</Tab>
          <Svg width="10" height="16" viewBox="0 0 10 16"><path d="M9 0L3 15" stroke="#333" /></Svg>
          <Tab>布局2</Tab>
          <Svg width="10" height="16" viewBox="0 0 10 16"><path d="M9 0L3 15" stroke="#333" /></Svg>
        </TabStrip>
        <Splitter />
        <HScroll>
          <Track>
            <ScrollButton aria-label="Scroll left"><Chevron turn={90} /></ScrollButton>
            <ThumbSlot><Thumb /></ThumbSlot>
            <ScrollButton aria-label="Scroll right"><Chevron turn={-90} /></ScrollButton>
          </Track>
        </HScroll>
      </Bottom>
      <Corner />
    </Document>
  );
}

function Tools({ names, width }: { names: string[]; width: number }) {
  return (
    <SideBar $w={width}>
      <Grip $flat />
      {names.map((n) => (
        <IconButton key={n} aria-label={n}><Icon name={n} /></IconButton>
      ))}
    </SideBar>
  );
}

export default function App() {
  return (
    <Window>
      <GlobalStyle />
      <TitleBar />
      <Toolbars />
      <Main>
        <Tools names={drawTools} width={24} />
        <DrawingArea />
        <Tools names={modifyTools} width={25} />
      </Main>
      <Command>
        <CommandGrip />
        <CommandBody>
          <History>
            <CommandLine>命令<Wide>: n</Wide></CommandLine>
            <CommandLine><Wide>BHATCH</Wide></CommandLine>
          </History>
          <CommandPrompt>
            拾取内部点或<Wide> [</Wide>选择对象<Wide>(S)/</Wide>设置<Wide>(T)]:</Wide>
          </CommandPrompt>
        </CommandBody>
        <RedFrame />
      </Command>
      <Status>
        <Coordinates>1920.4087,  2307.4932, 0.0000</Coordinates>
        {statusToggles.map(([n, on]) => (
          <StatusButton key={n} $on={on} aria-label={n} aria-pressed={on}><Icon name={n} /></StatusButton>
        ))}
        <StatusGap />
        <StatusButton $w={30}>模型</StatusButton>
        <StatusButton aria-label="Model space"><Icon name="modelSpace" /></StatusButton>
        <StatusButton aria-label="Layout view"><Icon name="modelSpace" /></StatusButton>
      </Status>
      <Logo>
        <Svg width="111" height="78" viewBox="12 14 333 234" fill="#dc241f" role="img" aria-label="CNMHG">
          <path d="M15 18H108L132 82L158 18H250V102H318V18H345V127H223V45H175L147 127H118L92 45H43V127H15Z" />
          <path d="M15 135H43V246H15Z M118 135H147V246H118Z M223 135H345V246H318V162H250V246H223Z" />
        </Svg>
        <LogoText>
          <LogoName>中国煤化工</LogoName>
          <LogoLatin>{"CNMHG".split("").map((c) => <span key={c}>{c}</span>)}</LogoLatin>
        </LogoText>
      </Logo>
    </Window>
  );
}
